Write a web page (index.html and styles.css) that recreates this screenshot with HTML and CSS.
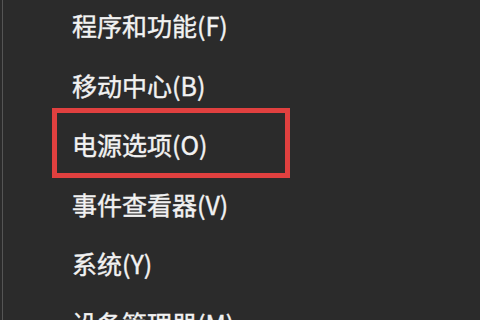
FILE: index.html
```html
<!DOCTYPE html>
<html lang="zh-CN">
<head>
<meta charset="utf-8">
<title>Win+X 菜单</title>
<link rel="stylesheet" href="styles.css">
</head>
<body>
<div class="screen">
  <ul class="menu">
    <li class="row">程序和功能(F)</li>
    <li class="row">移动中心(B)</li>
    <li class="row hl">电源选项(O)</li>
    <li class="row">事件查看器(V)</li>
    <li class="row">系统(Y)</li>
    <li class="row">设备管理器(M)</li>
  </ul>
</div>
</body>
</html>
```
FILE: styles.css
```css
html, body {
  margin: 0;
  padding: 0;
  background: #2b2b2b;
}
.screen {
  width: 480px;
  height: 320px;
  overflow: hidden;
  padding-left: 2px;
  box-sizing: border-box;
  background: #2b2b2b;
}
.menu {
  list-style: none;
  margin: -4px 0 0 0;
  padding: 0;
  border-left: 1px solid #555555;
  min-height: 340px;
}
.row {
  position: relative;
  height: 59.5px;
  display: flex;
  align-items: center;
  padding-left: 69px;
  font-family: "Noto Sans CJK SC", "Noto Sans", sans-serif;
  font-size: 25px;
  line-height: 1;
  color: #f2f2f2;
  -webkit-text-stroke: 0.4px #f2f2f2;
  white-space: nowrap;
}
.hl::after {
  content: "";
  position: absolute;
  left: 49px;
  top: -7px;
  width: 238px;
  height: 70px;
  box-sizing: border-box;
  border: 5px solid #e0403f;
}
```
